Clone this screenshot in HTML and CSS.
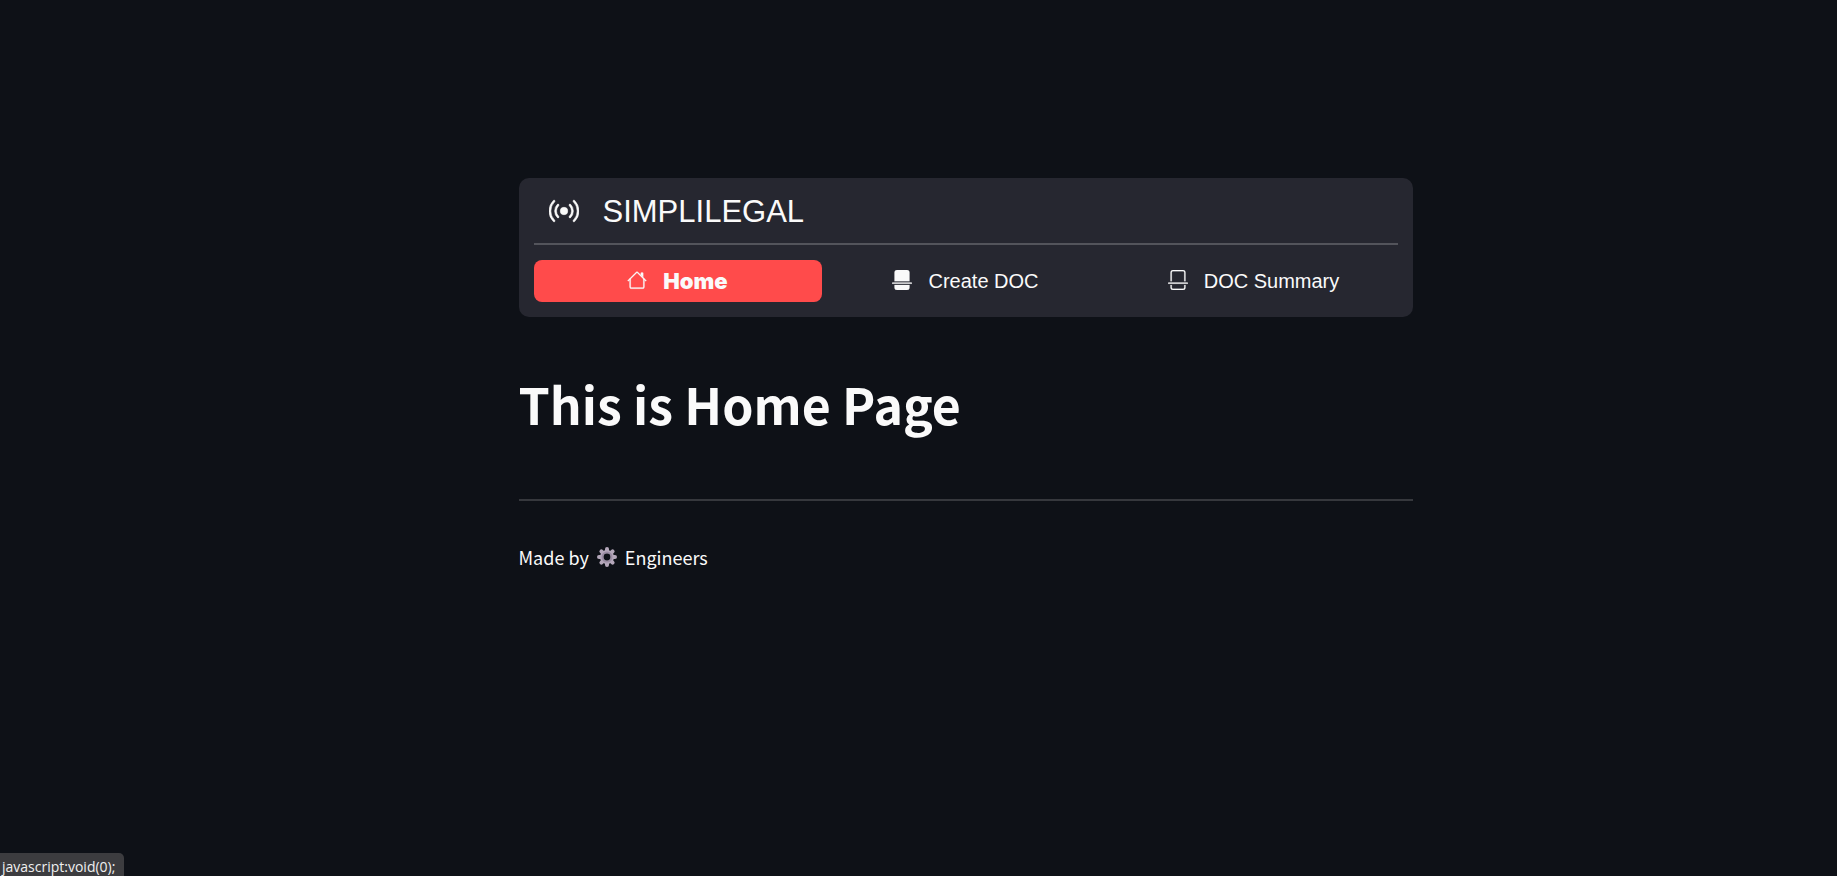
FILE: index.html
```html
<!DOCTYPE html>
<html lang="en">
<head>
<meta charset="utf-8">
<title>SIMPLILEGAL</title>
<link rel="stylesheet" href="styles.css">
</head>
<body>
<main class="page">
  <section class="menu">
    <div class="menu-title">
      <svg class="brand-icon" viewBox="0 0 16 16" aria-hidden="true"><path d="M3.05 3.05a7 7 0 0 0 0 9.9.5.5 0 0 1-.707.707 8 8 0 0 1 0-11.314.5.5 0 0 1 .707.707m2.122 2.122a4 4 0 0 0 0 5.656.5.5 0 1 1-.708.708 5 5 0 0 1 0-7.072.5.5 0 0 1 .708.708m5.656-.708a.5.5 0 0 1 .708 0 5 5 0 0 1 0 7.072.5.5 0 1 1-.708-.708 4 4 0 0 0 0-5.656.5.5 0 0 1 0-.708m2.122-2.12a.5.5 0 0 1 .707 0 8 8 0 0 1 0 11.313.5.5 0 0 1-.707-.707 7 7 0 0 0 0-9.9.5.5 0 0 1 0-.707zM10 8a2 2 0 1 1-4 0 2 2 0 0 1 4 0"/></svg>
      <span>SIMPLILEGAL</span>
    </div>
    <hr class="menu-rule">
    <nav class="tabs">
      <a class="tab tab-active" href="javascript:void(0);">
        <svg class="tab-icon" viewBox="0 0 16 16" aria-hidden="true"><path fill-rule="evenodd" d="M2 13.5V7h1v6.5a.5.5 0 0 0 .5.5h9a.5.5 0 0 0 .5-.5V7h1v6.5a1.5 1.5 0 0 1-1.5 1.5h-9A1.5 1.5 0 0 1 2 13.5zm11-11V6l-2-2V2.5a.5.5 0 0 1 .5-.5h1a.5.5 0 0 1 .5.5z"/><path fill-rule="evenodd" d="M7.293 1.5a1 1 0 0 1 1.414 0l6.647 6.646a.5.5 0 0 1-.708.708L8 2.207 1.354 8.854a.5.5 0 1 1-.708-.708L7.293 1.5z"/></svg>
        <span>Home</span>
      </a>
      <a class="tab" href="javascript:void(0);">
        <svg class="tab-icon" viewBox="0 0 16 16" aria-hidden="true"><path d="M4 0a2 2 0 0 0-2 2v7h12V2a2 2 0 0 0-2-2zM2 12h12v2a2 2 0 0 1-2 2H4a2 2 0 0 1-2-2zM.5 10a.5.5 0 0 0 0 1h15a.5.5 0 0 0 0-1z"/></svg>
        <span>Create DOC</span>
      </a>
      <a class="tab" href="javascript:void(0);">
        <svg class="tab-icon" viewBox="0 0 16 16" aria-hidden="true"><path d="M0 10.5a.5.5 0 0 1 .5-.5h15a.5.5 0 0 1 0 1H.5a.5.5 0 0 1-.5-.5M12 0H4a2 2 0 0 0-2 2v7h1V2a1 1 0 0 1 1-1h8a1 1 0 0 1 1 1v7h1V2a2 2 0 0 0-2-2m2 12h-1v2a1 1 0 0 1-1 1H4a1 1 0 0 1-1-1v-2H2v2a2 2 0 0 0 2 2h8a2 2 0 0 0 2-2z"/></svg>
        <span>DOC Summary</span>
      </a>
    </nav>
  </section>
  <h1 class="heading">This is Home Page</h1>
  <hr class="page-rule">
  <p class="credit">
    <span>Made by</span>
    <svg class="gear" viewBox="0 0 20 20" aria-hidden="true">
      <g stroke="#b4a7ba" stroke-width="4" stroke-linecap="round">
        <path d="M10 2v3M10 15v3M2 10h3M15 10h3M4.400 4.400l2 2M13.600 13.600l2 2M4.400 15.600l2-2M13.600 6.400l2-2"/>
      </g>
      <circle cx="10" cy="10" r="5.200" fill="none" stroke="#b4a7ba" stroke-width="3.600"/>
      <circle cx="10" cy="10" r="4.600" fill="none" stroke="#998ba2" stroke-width="1.800"/>
      <circle cx="10" cy="10" r="3.400" fill="#0e1117"/>
    </svg>
    <span>Engineers</span>
  </p>
</main>
<div class="status">javascript:void(0);</div>
</body>
</html>
```
FILE: styles.css
```css
* { box-sizing: border-box; }

body {
  margin: 0;
  min-height: 100vh;
  background: #0e1117;
  color: #fafafa;
  font-family: "Noto Sans CJK SC", "Open Sans", sans-serif;
}

.page {
  padding: 178px 0 0 94px;
}

.page > * {
  max-width: 894px;
  margin-left: auto;
  margin-right: auto;
}

.menu {
  padding: 15px;
  border-radius: 10px;
  background: #262730;
  font-family: "Liberation Sans", Arial, sans-serif;
}

.menu-title {
  display: flex;
  align-items: center;
  gap: 24px;
  padding: 0 15px;
  font-size: 31px;
  line-height: 38px;
}

.brand-icon,
.tab-icon {
  margin-bottom: 2px;
  fill: currentColor;
  stroke: currentColor;
}

.brand-icon {
  width: 30px;
  height: 30px;
  stroke-width: 0.3;
}

.menu-rule {
  height: 2px;
  margin: 12px 0 15px;
  border: 0;
  background: #53545b;
}

.tabs {
  display: grid;
  grid-template-columns: repeat(3, 1fr);
}

.tab {
  display: flex;
  align-items: center;
  justify-content: center;
  gap: 16px;
  padding: 8px;
  border-radius: 8px;
  color: inherit;
  font-size: 20px;
  line-height: 26px;
  text-decoration: none;
}

.tab-active {
  background: #ff4b4b;
  font-family: Inter, "Arial Black", sans-serif;
  font-size: 22px;
  font-weight: 900;
}

.tab-icon {
  width: 20px;
  height: 20px;
  stroke-width: 0.15;
}

.heading {
  margin-top: 53px;
  margin-bottom: 63px;
  font-size: 50px;
  font-weight: 700;
  line-height: 66px;
}

.page-rule {
  height: 2px;
  margin-top: 0;
  margin-bottom: 40px;
  border: 0;
  background: #36383d;
}

.credit {
  display: flex;
  align-items: center;
  gap: 8px;
  margin-top: 0;
  margin-bottom: 0;
  font-size: 18px;
  line-height: 32px;
}

.gear {
  width: 20px;
  height: 20px;
}

.status {
  position: fixed;
  left: 0;
  bottom: 0;
  padding: 4px 9px 0 2px;
  border-radius: 0 5px 0 0;
  background: #3c3c3f;
  color: #f0f0f0;
  font-family: "Open Sans", sans-serif;
  font-size: 14px;
  line-height: 19px;
}
```
